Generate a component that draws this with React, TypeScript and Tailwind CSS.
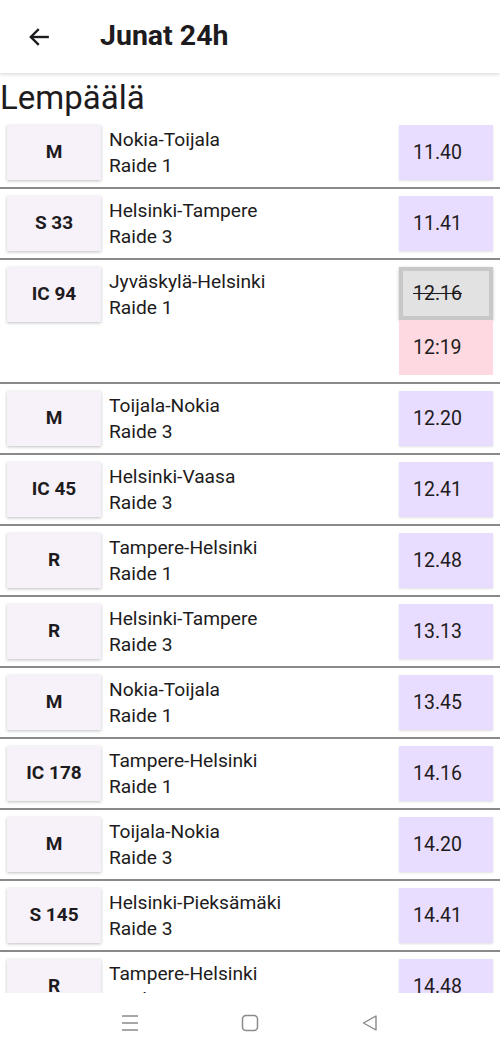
import React from "react";

type Row = {
  id: string;
  route: string;
  track: string;
  time: string;
  cancelled?: string;
};

const rows: Row[] = [
  { id: "M", route: "Nokia-Toijala", track: "Raide 1", time: "11.40" },
  { id: "S 33", route: "Helsinki-Tampere", track: "Raide 3", time: "11.41" },
  { id: "IC 94", route: "Jyväskylä-Helsinki", track: "Raide 1", time: "12:19", cancelled: "12.16" },
  { id: "M", route: "Toijala-Nokia", track: "Raide 3", time: "12.20" },
  { id: "IC 45", route: "Helsinki-Vaasa", track: "Raide 3", time: "12.41" },
  { id: "R", route: "Tampere-Helsinki", track: "Raide 1", time: "12.48" },
  { id: "R", route: "Helsinki-Tampere", track: "Raide 3", time: "13.13" },
  { id: "M", route: "Nokia-Toijala", track: "Raide 1", time: "13.45" },
  { id: "IC 178", route: "Tampere-Helsinki", track: "Raide 1", time: "14.16" },
  { id: "M", route: "Toijala-Nokia", track: "Raide 3", time: "14.20" },
  { id: "S 145", route: "Helsinki-Pieksämäki", track: "Raide 3", time: "14.41" },
  { id: "R", route: "Tampere-Helsinki", track: "Raide 1", time: "14.48" },
];

function TrainRow({ r }: { r: Row }) {
  return (
    <div className="flex items-start py-[7px] border-b-2 border-[#8a8a8a] shrink-0">
      <div className="ml-[7px] w-[94px] h-[55px] bg-[#f7f2fa] shadow-[0_1px_3px_rgba(0,0,0,0.25)] flex items-center justify-center shrink-0">
        <span className="text-[19px] font-bold text-[#1d1b20]">{r.id}</span>
      </div>
      <div className="flex-1 pl-[8px] pt-[2px] text-[19.2px] leading-[26px] text-[#1d1b20]">
        <div>{r.route}</div>
        <div>{r.track}</div>
      </div>
      <div className="mr-[7px] w-[94px] shrink-0 flex flex-col">
        {r.cancelled ? (
          <>
            <div className="h-[53px] bg-[#c8c8c8] p-[4px] shadow-[0_1px_3px_rgba(0,0,0,0.25)]">
              <div className="h-full bg-[#e2e2e2] flex items-center pl-[10px] text-[19.5px] text-[#1d1b20] line-through">
                {r.cancelled}
              </div>
            </div>
            <div className="h-[55px] bg-[#ffd9e1] flex items-center pl-[14px] text-[19.5px] text-[#1d1b20]">
              {r.time}
            </div>
          </>
        ) : (
          <div className="h-[55px] bg-[#e9ddff] shadow-[0_1px_2px_rgba(0,0,0,0.12)] flex items-center pl-[14px] text-[19.5px] text-[#1d1b20]">
            {r.time}
          </div>
        )}
      </div>
    </div>
  );
}

export default function App() {
  return (
    <div
      className="w-[500px] h-[1055px] bg-white flex flex-col overflow-hidden"
      style={{ fontFamily: "Roboto, 'Liberation Sans', sans-serif" }}
    >
      <header className="h-[73px] shrink-0 flex items-center bg-white shadow-[0_2px_3px_rgba(0,0,0,0.12)] z-10 relative">
        <div className="w-[100px] pl-[26px] flex items-center">
          <svg width="26" height="26" viewBox="0 0 24 24" fill="none" stroke="#1d1b20" strokeWidth="2.2" strokeLinecap="square">
            <path d="M20 12H5" />
            <path d="M11 5.5L4.5 12L11 18.5" />
          </svg>
        </div>
        <h1 className="text-[28.5px] font-bold text-[#1d1b20] pb-[1px]">Junat 24h</h1>
      </header>
      <main className="flex-1 overflow-hidden flex flex-col">
        <div className="h-[45px] shrink-0 flex items-end pl-[0px]">
          <span className="text-[33px] leading-[40px] text-[#1d1b20]">Lempäälä</span>
        </div>
        {rows.map((r, i) => (
          <TrainRow key={i} r={r} />
        ))}
      </main>
      <nav className="h-[62px] shrink-0 bg-white flex items-center justify-center gap-0 pb-[2px]">
        <div className="w-[120px] flex justify-center">
          <svg width="20" height="20" viewBox="0 0 20 20" fill="none" stroke="#8a8a8a" strokeWidth="1.3">
            <path d="M2 3h16M2 10h16M2 17h16" />
          </svg>
        </div>
        <div className="w-[120px] flex justify-center">
          <svg width="20" height="20" viewBox="0 0 20 20" fill="none" stroke="#8a8a8a" strokeWidth="1.5">
            <rect x="2.5" y="2.5" width="15" height="15" rx="3.5" />
          </svg>
        </div>
        <div className="w-[120px] flex justify-center">
          <svg width="20" height="20" viewBox="0 0 20 20" fill="none" stroke="#8a8a8a" strokeWidth="1.4" strokeLinejoin="round">
            <path d="M16 3L3.5 10L16 17Z" />
          </svg>
        </div>
      </nav>
    </div>
  );
}
